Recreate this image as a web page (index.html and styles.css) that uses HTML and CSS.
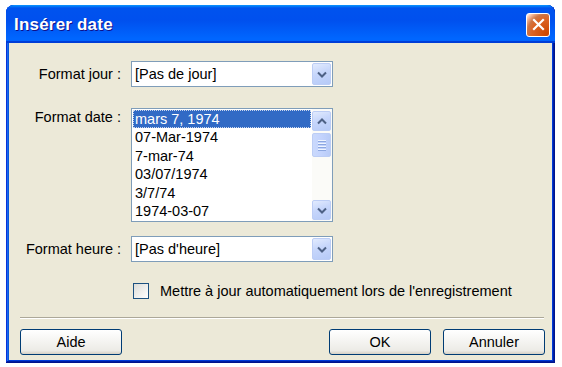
FILE: index.html
```html
<!DOCTYPE html>
<html lang="fr">
<head>
<meta charset="utf-8">
<title>Insérer date</title>
<link rel="stylesheet" href="styles.css">
</head>
<body>
<div class="window">
  <div class="titlebar">
    <span class="title">Insérer date</span>
    <span class="close">
      <svg width="13" height="13" viewBox="0 0 13 13"><path d="M2 2 L11 11 M11 2 L2 11" stroke="#fff" stroke-width="2.2" stroke-linecap="square" fill="none"/></svg>
    </span>
  </div>
  <div class="content">
    <div class="form">
      <label class="lbl">Format jour :</label>
      <div class="combo combo-first">
        <span class="combo-text">[Pas de jour]</span>
        <span class="arrow-btn"><svg width="10" height="7" viewBox="0 0 10 7"><path d="M1 1.5 L5 5.5 L9 1.5" stroke="#4d6185" stroke-width="2" fill="none"/></svg></span>
      </div>

      <label class="lbl lbl-top">Format date :</label>
      <div class="listbox">
        <ul class="items">
          <li class="item selected"><span>mars 7, 1974</span></li>
          <li class="item"><span>07-Mar-1974</span></li>
          <li class="item"><span>7-mar-74</span></li>
          <li class="item"><span>03/07/1974</span></li>
          <li class="item"><span>3/7/74</span></li>
          <li class="item"><span>1974-03-07</span></li>
        </ul>
        <div class="scrollbar">
          <span class="sb-btn"><svg width="10" height="7" viewBox="0 0 10 7"><path d="M1 5.5 L5 1.5 L9 5.5" stroke="#4d6185" stroke-width="2" fill="none"/></svg></span>
          <span class="sb-thumb"><span class="grip"></span><span class="grip"></span><span class="grip"></span><span class="grip"></span></span>
          <span class="sb-track"></span>
          <span class="sb-btn"><svg width="10" height="7" viewBox="0 0 10 7"><path d="M1 1.5 L5 5.5 L9 1.5" stroke="#4d6185" stroke-width="2" fill="none"/></svg></span>
        </div>
      </div>

      <label class="lbl">Format heure :</label>
      <div class="combo">
        <span class="combo-text">[Pas d'heure]</span>
        <span class="arrow-btn"><svg width="10" height="7" viewBox="0 0 10 7"><path d="M1 1.5 L5 5.5 L9 1.5" stroke="#4d6185" stroke-width="2" fill="none"/></svg></span>
      </div>

      <span></span>
      <div class="check-row">
        <span class="checkbox"></span>
        <span class="check-label">Mettre à jour automatiquement lors de l'enregistrement</span>
      </div>
    </div>

    <div class="separator"></div>

    <div class="buttons">
      <button class="btn">Aide</button>
      <span class="spacer"></span>
      <button class="btn">OK</button>
      <button class="btn">Annuler</button>
    </div>
  </div>
</div>
</body>
</html>
```

FILE: styles.css
```css
html, body {
  margin: 0;
  padding: 0;
  background: #ffffff;
}

body {
  font-family: "Liberation Sans", Arial, sans-serif;
  font-size: 14.5px;
  color: #000;
}

.window {
  box-sizing: border-box;
  margin: 5px 0 0 6px;
  width: 549px;
  height: 358px;
  display: flex;
  flex-direction: column;
  background: #0831d9;
  border-radius: 8px 8px 0 0;
  padding: 0 3px 3px;
  box-shadow: inset -1px -1px #00138c, inset 1px 1px #0831d9,
              inset -2px -2px #001ea0, inset 2px 2px #166aee,
              inset -3px -3px #003bda, inset 3px 3px #0855dd;
}

.titlebar {
  height: 38px;
  margin: 0 -3px;
  padding: 0 5px 0 8px;
  display: flex;
  align-items: center;
  justify-content: space-between;
  border-radius: 8px 8px 0 0;
  background: linear-gradient(180deg, #0997ff, #0053ee 8%, #0050ee 40%, #0066ff 88%, #0066ff 93%, #005bff 95%, #003dd7 96%, #003dd7);
}

.title {
  color: #fff;
  font-family: "Liberation Sans", Arial, sans-serif;
  font-weight: bold;
  font-size: 17px;
  letter-spacing: 0.2px;
  text-shadow: 1px 1px #0f1089;
  padding-top: 1px;
}

.close {
  box-sizing: border-box;
  width: 24px;
  height: 24px;
  border: 1px solid #fff;
  border-radius: 3px;
  display: flex;
  align-items: center;
  justify-content: center;
  background: radial-gradient(circle at 90% 90%, #cc4600 0, #dc6527 55%, #cd7546 70%, #ffccb2 90%, #fff 100%);
  margin-top: 1px;
}

.content {
  flex: 1;
  background: #ece9d8;
  display: flex;
  flex-direction: column;
  padding-top: 18px;
}

.form {
  display: grid;
  grid-template-columns: 112px 202px;
  column-gap: 10px;
  row-gap: 0;
  align-items: start;
}

.lbl {
  text-align: right;
  white-space: nowrap;
  line-height: 26px;
}

.lbl-top {
  line-height: 18px;
}

.combo {
  box-sizing: border-box;
  height: 26px;
  border: 1px solid #7f9db9;
  background: #fff;
  display: flex;
  align-items: stretch;
  padding: 1px;
}

.combo-first {
  margin-bottom: 21px;
}

.combo-text {
  flex: 1;
  display: flex;
  align-items: center;
  padding-left: 2px;
}

.arrow-btn,
.sb-btn {
  box-sizing: border-box;
  width: 19px;
  display: flex;
  align-items: center;
  justify-content: center;
  border: 1px solid #bccdf5;
  border-radius: 2px;
  background: linear-gradient(160deg, #e2ebfe 0%, #c6d6fb 45%, #b6caf7 100%);
}

.listbox {
  box-sizing: border-box;
  height: 114px;
  border: 1px solid #7f9db9;
  background: #fff;
  display: flex;
  margin-bottom: 14px;
}

.items {
  list-style: none;
  margin: 0;
  padding: 1px 1px 0 1px;
  flex: 1;
}

.item {
  height: 18.4px;
  line-height: 18.4px;
  padding-left: 2px;
}

.item.selected {
  background: #316ac5;
  color: #fff;
  outline: 1px dotted #c9d6ee;
  outline-offset: -1px;
}

.scrollbar {
  width: 19px;
  padding: 2px 1px 1px 0;
  display: flex;
  flex-direction: column;
  gap: 2px;
  background: #fbfbf8;
}

.sb-btn {
  height: 20px;
  flex: none;
}

.sb-thumb {
  box-sizing: border-box;
  height: 24px;
  border: 1px solid #bccdf5;
  border-radius: 2px;
  background: linear-gradient(90deg, #cad9fc, #c3d3fd 50%, #b8cbf7);
  display: flex;
  flex-direction: column;
  align-items: center;
  justify-content: center;
  gap: 2px;
}

.grip {
  width: 8px;
  height: 1px;
  background: #eef4fe;
  box-shadow: 0 1px #8ca7e0;
}

.sb-track {
  flex: 1;
}

.check-row {
  display: flex;
  align-items: center;
  margin-top: 20px;
  padding-left: 2px;
  height: 18px;
}

.checkbox {
  box-sizing: border-box;
  flex: none;
  width: 16px;
  height: 16px;
  border: 1px solid #1c5180;
  background: linear-gradient(135deg, #dcdcd7, #fff);
  margin-right: 11px;
}

.check-label {
  white-space: nowrap;
}

.separator {
  margin: 17px 8px 0 11px;
  border-top: 1px solid #aca899;
  border-bottom: 1px solid #fff;
}

.buttons {
  display: flex;
  padding: 10px 7px 0 11px;
  gap: 12px;
}

.spacer {
  flex: 1;
}

.btn {
  box-sizing: border-box;
  width: 102px;
  height: 26px;
  font-family: "Liberation Sans", Arial, sans-serif;
  font-size: 14.5px;
  color: #000;
  border: 1px solid #003c74;
  border-radius: 3px;
  background: linear-gradient(180deg, #fff, #ecebe6 86%, #d6d0c5);
  padding: 0;
}
```
